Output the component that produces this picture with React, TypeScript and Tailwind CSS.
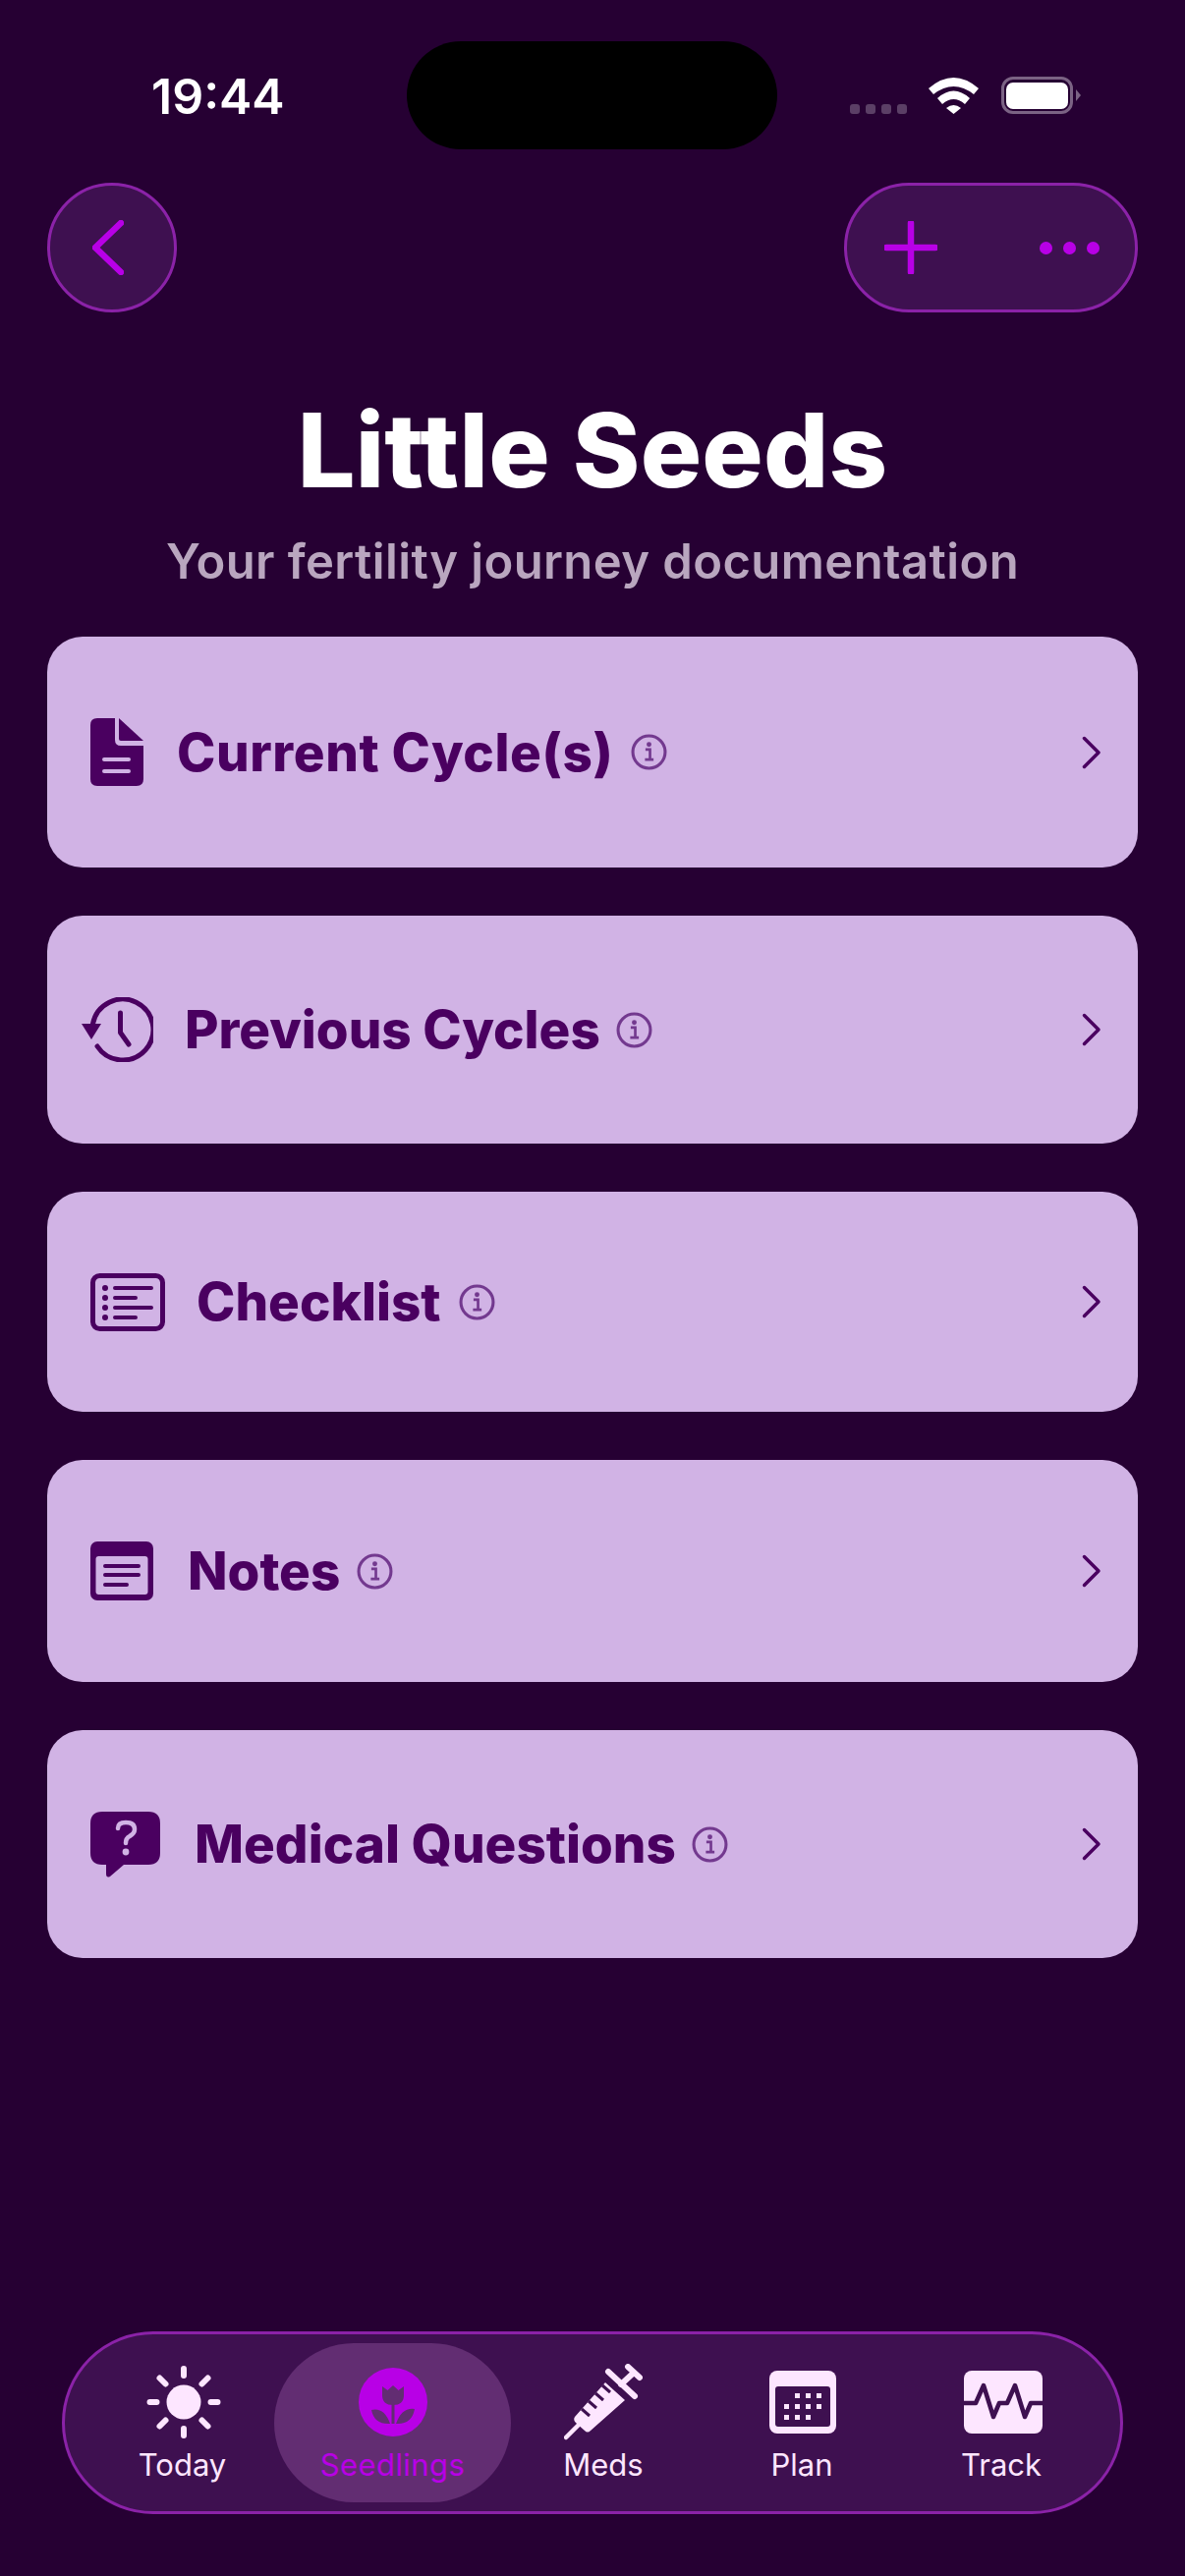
import React from 'react';

const font = "font-['Inter','Noto_Sans',sans-serif]";

const InfoIcon = () => (
  <svg viewBox="0 0 36 36" className="h-[37px] w-[37px] shrink-0 text-[#73398f]">
    <circle cx="18" cy="18" r="16" fill="none" stroke="currentColor" strokeWidth="3" />
    <circle cx="18" cy="10.5" r="2.4" fill="currentColor" />
    <path d="M14.5 15.5H19V25M14 25.5H22.5" fill="none" stroke="currentColor" strokeWidth="2.6" />
  </svg>
);

const DocIcon = () => (
  <svg viewBox="0 0 54 69" className="h-[69px] w-[54px] shrink-0">
    <path d="M7 0H25V22Q25 28 31 28H54V62Q54 69 47 69H7Q0 69 0 62V7Q0 0 7 0Z" fill="#4a0060" />
    <path d="M29 0L54 23H31Q29 23 29 21Z" fill="#4a0060" />
    <path d="M14 42H39M14 54H39" stroke="#d1b3e5" strokeWidth="4" strokeLinecap="round" />
  </svg>
);

const HistoryIcon = () => (
  <svg viewBox="0 0 73 66" className="h-[66px] w-[73px] shrink-0" fill="none">
    <path d="M11.5 27A31 31 0 1 1 16 50" stroke="#4a0060" strokeWidth="5" strokeLinecap="round" />
    <path d="M0 27H20L10 43Z" fill="#4a0060" />
    <path d="M39.5 16V36L48 48" stroke="#4a0060" strokeWidth="5" strokeLinecap="round" strokeLinejoin="round" />
  </svg>
);

const ChecklistIcon = () => (
  <svg viewBox="0 0 76 59" className="h-[59px] w-[76px] shrink-0" fill="none">
    <rect x="2.5" y="2.5" width="71" height="54" rx="7" stroke="#4a0060" strokeWidth="5" />
    <g fill="#4a0060">
      <circle cx="15" cy="15" r="3" />
      <circle cx="15" cy="25" r="3" />
      <circle cx="15" cy="35" r="3" />
      <circle cx="15" cy="45" r="3" />
    </g>
    <path d="M25 15H62M25 25H46M25 35H62M25 45H46" stroke="#4a0060" strokeWidth="4" strokeLinecap="round" />
  </svg>
);

const NotesIcon = () => (
  <svg viewBox="0 0 64 60" className="h-[60px] w-[64px] shrink-0">
    <rect width="64" height="60" rx="7" fill="#4a0060" />
    <rect x="5.5" y="15" width="53" height="39" rx="3" fill="#d1b3e5" />
    <path d="M15 25H49M15 34H49M15 44H37" stroke="#4a0060" strokeWidth="4" strokeLinecap="round" />
  </svg>
);

const QuestionIcon = () => (
  <svg viewBox="0 0 71 67" className="h-[67px] w-[71px] shrink-0">
    <path
      d="M12 0H59Q71 0 71 12V42Q71 54 59 54H34L20 66Q16 68 16 63V54H12Q0 54 0 42V12Q0 0 12 0Z"
      fill="#4a0060"
    />
    <path
      d="M28 17Q28 11 36 11Q45 11 45 18Q45 22 40 25Q36 27 36 32"
      fill="none"
      stroke="#d1b3e5"
      strokeWidth="4.5"
      strokeLinecap="round"
    />
    <circle cx="36" cy="41" r="3.4" fill="#d1b3e5" />
  </svg>
);

const rows = [
  { label: 'Current Cycle(s)', icon: <DocIcon />, h: 'h-[235px]', gap: 'ml-[34px] tracking-[0.6px]', pad: 'pl-[44px]', info: 'ml-[18px]' },
  { label: 'Previous Cycles', icon: <HistoryIcon />, h: 'h-[232px]', gap: 'ml-[32px]', pad: 'pl-[35px]', info: 'ml-[16px]' },
  { label: 'Checklist', icon: <ChecklistIcon />, h: 'h-[224px]', gap: 'ml-[32px]', pad: 'pl-[44px]', info: 'ml-[18px]' },
  { label: 'Notes', icon: <NotesIcon />, h: 'h-[226px]', gap: 'ml-[35px]', pad: 'pl-[44px]', info: 'ml-[17px]' },
  { label: 'Medical Questions', icon: <QuestionIcon />, h: 'h-[232px]', gap: 'ml-[35px]', pad: 'pl-[44px]', info: 'ml-[16px]' },
];

const SunIcon = () => (
  <svg viewBox="0 0 76 76" className="h-[76px] w-[76px]" fill="none">
    <circle cx="38" cy="38" r="17.5" fill="#fde6ff" />
    <path
      d="M38 4V11M38 65V72M3.5 38H10.5M65.5 38H72.5M13.5 13.5L19.5 19.5M56.5 56.5L62.5 62.5M62.5 13.5L56.5 19.5M19.5 56.5L13.5 62.5"
      stroke="#fde6ff"
      strokeWidth="6"
      strokeLinecap="round"
    />
  </svg>
);

const SeedIcon = () => (
  <svg viewBox="0 0 70 70" className="h-[70px] w-[70px]">
    <circle cx="35" cy="35" r="35" fill="#b800e6" />
    <path d="M24 19L29.5 23L35 18L40.5 23L46 19V28Q46 38 35 38Q24 38 24 28Z" fill="#622d72" />
    <path d="M33.5 36H36.5V57H33.5Z" fill="#622d72" />
    <path d="M13 43Q26 40 32 57Q16 58 13 43ZM57 42Q44 40 38 57Q54 58 57 42Z" fill="#622d72" />
  </svg>
);

const SyringeIcon = () => (
  <svg viewBox="0 0 80 78" className="h-[78px] w-[80px]" fill="none">
    <path d="M2 75L15 62" stroke="#fde6ff" strokeWidth="4.5" strokeLinecap="round" />
    <path d="M11 54L42 19L62 37L27 68Q24 71 21 68L12 60Q9 57 11 54Z" fill="#fde6ff" />
    <path d="M18 46L26 53M25 38L33 45M32 30L40 37M39 22L47 29" stroke="#3e1050" strokeWidth="3" />
    <path d="M45 8L72 33M58 21L71 9M65 3L77 14" stroke="#fde6ff" strokeWidth="6" strokeLinecap="round" />
  </svg>
);

const PlanIcon = () => (
  <svg viewBox="0 0 68 64" className="ml-[2px] h-[64px] w-[68px]">
    <rect width="68" height="64" rx="8" fill="#fde6ff" />
    <rect x="6" y="16" width="56" height="41" rx="3" fill="#3e1050" />
    <g fill="#fde6ff">
      <rect x="26" y="23" width="5" height="5" />
      <rect x="37" y="23" width="5" height="5" />
      <rect x="48" y="23" width="5" height="5" />
      <rect x="15" y="34" width="5" height="5" />
      <rect x="26" y="34" width="5" height="5" />
      <rect x="37" y="34" width="5" height="5" />
      <rect x="48" y="34" width="5" height="5" />
      <rect x="15" y="45" width="5" height="5" />
      <rect x="26" y="45" width="5" height="5" />
      <rect x="37" y="45" width="5" height="5" />
    </g>
  </svg>
);

const TrackIcon = () => (
  <svg viewBox="0 0 80 64" className="h-[64px] w-[80px]" fill="none">
    <rect width="80" height="64" rx="8" fill="#fde6ff" />
    <path
      d="M0 33H12L20 15L30 47L36 33H44L52 15L62 47L68 33H80"
      stroke="#3e1050"
      strokeWidth="4.5"
      strokeLinejoin="round"
    />
  </svg>
);

const tabs = [
  { label: 'Today', icon: <SunIcon />, w: 'w-[184px]', text: 'mr-[3px]' },
  { label: 'Seedlings', icon: <SeedIcon />, w: 'w-[241px]', text: 'tracking-[0.4px]', active: true },
  { label: 'Meds', icon: <SyringeIcon />, w: 'w-[188px]', text: '' },
  { label: 'Plan', icon: <PlanIcon />, w: 'w-[216px]', text: '' },
  { label: 'Track', icon: <TrackIcon />, w: 'w-[194px]', text: 'mr-[4px]' },
];

const StatusBar = () => (
  <div className="relative h-[186px] shrink-0">
    <span className="absolute left-[154px] top-[70px] text-[50px] leading-[56px] font-semibold text-white">19:44</span>
    <div className="absolute left-[414px] top-[42px] h-[110px] w-[377px] rounded-[55px] bg-black" />
    <div className="absolute left-[865px] top-[78px] flex items-center">
      <div className="mt-[28px] flex gap-[6px]">
        <span className="h-[10px] w-[10px] rounded-[3px] bg-[#5b3f66]" />
        <span className="h-[10px] w-[10px] rounded-[3px] bg-[#5b3f66]" />
        <span className="h-[10px] w-[10px] rounded-[3px] bg-[#5b3f66]" />
        <span className="h-[10px] w-[10px] rounded-[3px] bg-[#5b3f66]" />
      </div>
      <svg viewBox="0 0 51 37" className="ml-[22px] h-[37px] w-[51px]" fill="white">
        <path d="M0 11Q25.5 -11 51 11L46 17Q25.5 1 5 17Z" />
        <path d="M9 21Q25.5 6 42 21L37 27Q25.5 17 14 27Z" />
        <path d="M18 31Q25.5 25 33 31L25.5 37Z" />
      </svg>
      <div className="ml-[23px] flex h-[38px] w-[73px] items-center justify-center rounded-[12px] border-[3px] border-[#7b6384]">
        <div className="h-[27px] w-[63px] rounded-[7px] bg-white" />
      </div>
      <svg viewBox="0 0 5 12" className="ml-[3px] h-[12px] w-[5px]" fill="#7b6384">
        <path d="M0 0L5 6L0 12Z" />
      </svg>
    </div>
  </div>
);

export default function App() {
  return (
    <div className={`${font} flex h-[2622px] w-[1206px] flex-col overflow-hidden bg-[#260033]`}>
      <StatusBar />

      {/* Top buttons */}
      <div className="flex shrink-0 items-center justify-between px-[48px]">
        <button className="flex h-[132px] w-[132px] items-center justify-center rounded-full border-[3px] border-[#8b22a8] bg-[#3e1050]">
          <svg viewBox="0 0 32 56" className="mr-[8px] h-[56px] w-[32px]" fill="none">
            <path d="M29 3L3 28L29 53" stroke="#b800e6" strokeWidth="6.5" strokeLinecap="round" strokeLinejoin="round" />
          </svg>
        </button>
        <div className="flex h-[132px] w-[299px] items-center justify-between rounded-[66px] border-[3px] border-[#8b22a8] bg-[#3e1050] pl-[38px] pr-[36px]">
          <svg viewBox="0 0 54 54" className="h-[54px] w-[54px]" fill="none">
            <path d="M27 2V52M2 27H52" stroke="#b800e6" strokeWidth="6.5" strokeLinecap="round" />
          </svg>
          <div className="flex gap-[11px]">
            <span className="h-[13px] w-[13px] rounded-full bg-[#b800e6]" />
            <span className="h-[13px] w-[13px] rounded-full bg-[#b800e6]" />
            <span className="h-[13px] w-[13px] rounded-full bg-[#b800e6]" />
          </div>
        </div>
      </div>

      {/* Title */}
      <h1 className="mt-[83px] text-center text-[104px] leading-[114px] font-extrabold tracking-[0.2px] text-white">Little Seeds</h1>
      <p className="mt-[28px] text-center text-[49px] leading-[58px] font-semibold tracking-[0.4px] text-[#b9a6bf]">
        Your fertility journey documentation
      </p>

      {/* Menu cards */}
      <div className="mt-[47px] flex flex-col gap-[49px] px-[48px]">
        {rows.map((row) => (
          <div key={row.label} className={`flex items-center rounded-[36px] bg-[#d1b3e5] pr-[37px] ${row.h} ${row.pad}`}>
            {row.icon}
            <span className={`text-[53px] leading-[64px] font-extrabold text-[#4a0060] ${row.gap}`}>{row.label}</span>
            <span className={row.info}>
              <InfoIcon />
            </span>
            <svg viewBox="0 0 20 34" className="ml-auto h-[34px] w-[20px]" fill="none">
              <path d="M2.5 2.5L17 17L2.5 31.5" stroke="#4a0060" strokeWidth="3.5" strokeLinecap="round" strokeLinejoin="round" />
            </svg>
          </div>
        ))}
      </div>

      {/* Tab bar */}
      <div className="mt-auto mb-[63px] ml-[63px] flex h-[186px] w-[1080px] items-center rounded-[93px] border-[3px] border-[#8b22a8] bg-[#3e1050] pl-[29px]">
        {tabs.map((tab) => (
          <div
            key={tab.label}
            className={`flex h-[162px] shrink-0 flex-col items-center rounded-[81px] ${tab.w} ${tab.active ? 'bg-[#622d72]' : ''}`}
          >
            <div className="flex h-[105px] items-center justify-center pt-[15px]">{tab.icon}</div>
            <span className={`text-[31px] leading-[38px] ${tab.text} ${tab.active ? 'text-[#b800e6]' : 'text-[#fde6ff]'}`}>
              {tab.label}
            </span>
          </div>
        ))}
      </div>
    </div>
  );
}
